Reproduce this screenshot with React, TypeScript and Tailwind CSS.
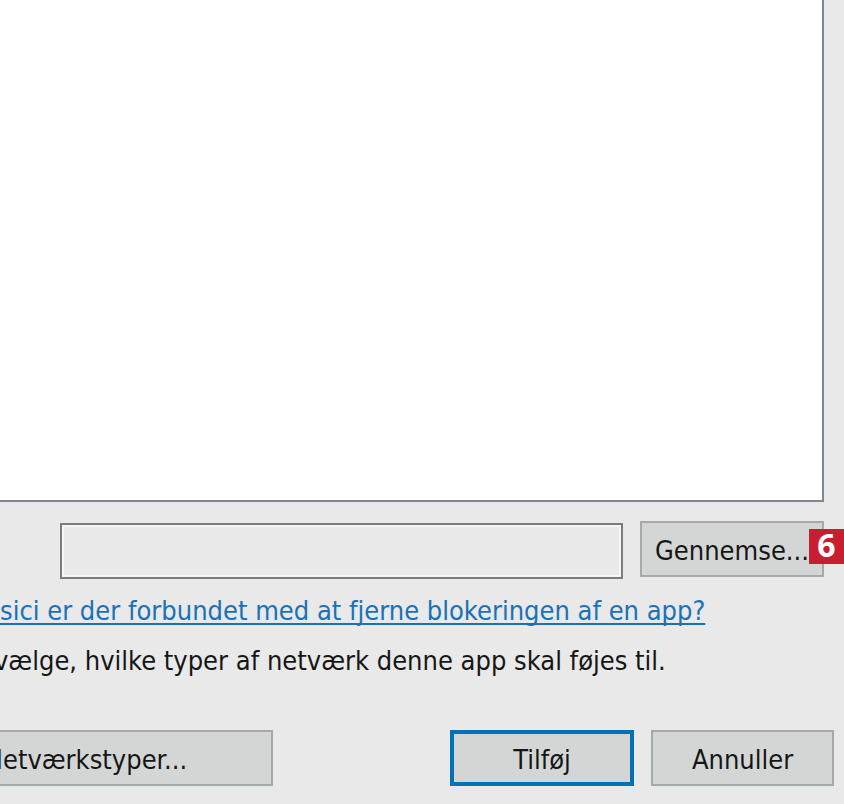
import type { ButtonHTMLAttributes } from "react"
import { clsx } from "clsx"

interface DialogButtonProps extends ButtonHTMLAttributes<HTMLButtonElement> {
    primary?: boolean;
}

function DialogButton({ primary = false, className, children, ...rest }: DialogButtonProps) {
    return (
        <button
            type="button"
            className={clsx(
                "h-14 shrink-0 bg-[#d4d6d5] pt-1 text-center whitespace-nowrap",
                primary ? "border-4 border-[#0072b5]" : "border-2 border-[#a5a9aa]",
                className
            )}
            {...rest}
        >
            {children}
        </button>
    )
}

export default function App() {
    return (
        <div className="min-h-screen overflow-hidden bg-[#e8e9e8] pb-[18px] font-['DejaVu_Sans_Condensed','DejaVu_Sans',sans-serif] text-[27px] leading-8 text-[#161616]">
            <div className="mr-5 h-[502px] border-r-2 border-b-2 border-[#7f8793] bg-white" />

            <div className="mt-[19px] mr-5 flex gap-[17px] pl-[60px]">
                <input
                    type="text"
                    aria-label="Sti"
                    className="mt-0.5 h-14 min-w-0 flex-1 border-2 border-[#7b7d7c] bg-[#e8e9e8] px-3 shadow-[inset_0_0_0_2px_#f5f6f5] outline-none"
                />
                <div className="relative">
                    <DialogButton className="w-[184px]">Gennemse...</DialogButton>
                    <span className="absolute top-2 -right-5 flex h-[35px] w-[35px] items-center justify-center bg-[#c81e31] pb-1 font-['Open_Sans',sans-serif] text-[32px] font-bold text-white">
                        6
                    </span>
                </div>
            </div>

            <div className="mt-4">
                <a href="#" className="whitespace-nowrap text-[#1b71b5] underline decoration-2 underline-offset-3 [text-decoration-skip-ink:none]">
                    sici er der forbundet med at fjerne blokeringen af en app?
                </a>
            </div>
            <p className="mt-[18px] -ml-1.5 whitespace-nowrap">vælge, hvilke typer af netværk denne app skal føjes til.</p>

            <div className="mt-[53px] mr-2.5 flex justify-between">
                <DialogButton className="-ml-[101px] w-[374px]">Netværkstyper...</DialogButton>
                <div className="flex gap-[17px]">
                    <DialogButton primary className="w-[184px]">Tilføj</DialogButton>
                    <DialogButton className="w-[183px]">Annuller</DialogButton>
                </div>
            </div>
        </div>
    )
}
